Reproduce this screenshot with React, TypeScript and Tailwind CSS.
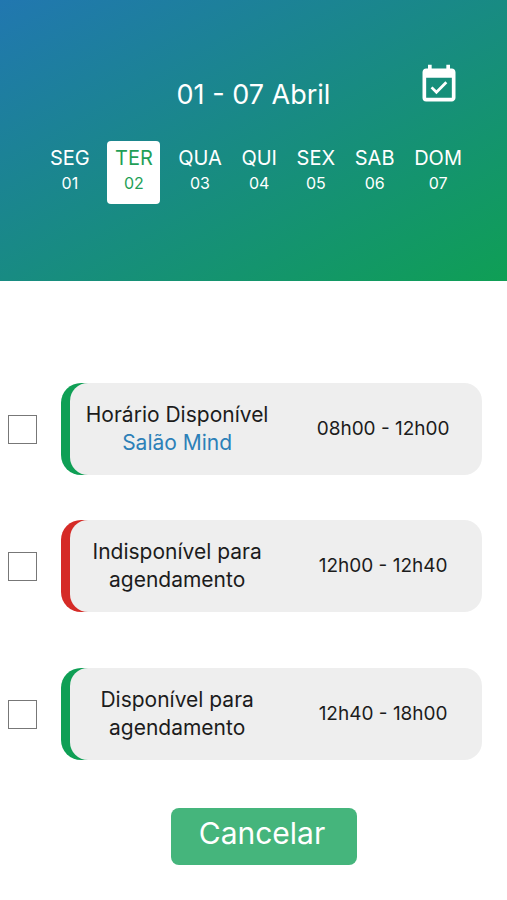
import { useState } from "react";
import { MdEventAvailable } from "react-icons/md";

const days = [
    { name: "SEG", date: "01" },
    { name: "TER", date: "02" },
    { name: "QUA", date: "03" },
    { name: "QUI", date: "04" },
    { name: "SEX", date: "05" },
    { name: "SAB", date: "06" },
    { name: "DOM", date: "07" }
];

const slots = [
    {
        id: "slot-1",
        title: "Horário Disponível",
        place: "Salão Mind",
        time: "08h00 - 12h00",
        available: true,
        spacing: ""
    },
    {
        id: "slot-2",
        title: "Indisponível para agendamento",
        time: "12h00 - 12h40",
        available: false,
        spacing: "mt-[45px]"
    },
    {
        id: "slot-3",
        title: "Disponível para agendamento",
        time: "12h40 - 18h00",
        available: true,
        spacing: "mt-14"
    }
];

const Header = () => {
    const [selected, setSelected] = useState("02");

    return (
        <header className="bg-linear-to-br/srgb from-[#2177b0] to-[#0f9f55] pt-[63px] pb-[77px] text-white">
            <div className="grid grid-cols-[1fr_auto_1fr] items-start px-[46px]">
                <h1 className="col-start-2 mt-3 text-[27px] leading-10">
                    01 - 07 Abril
                </h1>
                <button
                    type="button"
                    aria-label="Abrir calendário"
                    className="justify-self-end"
                >
                    <MdEventAvailable className="size-11" />
                </button>
            </div>
            <nav className="mt-[26px] flex justify-between pr-[45px] pl-[50px]">
                {days.map((day) => (
                    <button
                        key={day.date}
                        type="button"
                        onClick={() => setSelected(day.date)}
                        className={`flex h-[63px] flex-col items-center pt-[3px] ${
                            selected === day.date
                                ? "-mx-0.5 w-[53px] rounded bg-white text-[#1f9f57]"
                                : ""
                        }`}
                    >
                        <span className="text-[20px] leading-7">
                            {day.name}
                        </span>
                        <span className="text-[16px] leading-[22px]">
                            {day.date}
                        </span>
                    </button>
                ))}
            </nav>
        </header>
    );
};

const App = () => {
    return (
        <div className="min-h-screen bg-white font-['Inter',sans-serif] text-[#1c1c1c]">
            <Header />
            <main className="pt-[102px] pr-[25px] pb-9 pl-2">
                <ul>
                    {slots.map((slot) => (
                        <li
                            key={slot.id}
                            className={`flex items-center gap-6 ${slot.spacing}`}
                        >
                            <input
                                id={slot.id}
                                type="checkbox"
                                className="size-[29px] shrink-0 appearance-none border border-[#777777] bg-white checked:bg-[#45b57c]"
                            />
                            <label
                                htmlFor={slot.id}
                                className={`flex-1 rounded-l-[20px] rounded-r-[28px] pl-[9px] ${
                                    slot.available
                                        ? "bg-[#0f9f55]"
                                        : "bg-[#d52b27]"
                                }`}
                            >
                                <span className="flex items-center rounded-[18px] bg-[#eeeeee] py-[18px] text-center">
                                    <span className="flex w-[52%] flex-col px-3 text-[21px] leading-7">
                                        {slot.title}
                                        {slot.place && (
                                            <span className="text-[#2c80b8]">
                                                {slot.place}
                                            </span>
                                        )}
                                    </span>
                                    <span className="flex-1 text-[19px] leading-7">
                                        {slot.time}
                                    </span>
                                </span>
                            </label>
                        </li>
                    ))}
                </ul>
                <div className="mt-12 flex justify-center pl-[38px]">
                    <button
                        type="button"
                        className="h-[57px] w-[186px] rounded-lg bg-[#45b57c] pr-1 pb-2 text-[30px] leading-10 text-white"
                    >
                        Cancelar
                    </button>
                </div>
            </main>
        </div>
    );
};

export default App;
